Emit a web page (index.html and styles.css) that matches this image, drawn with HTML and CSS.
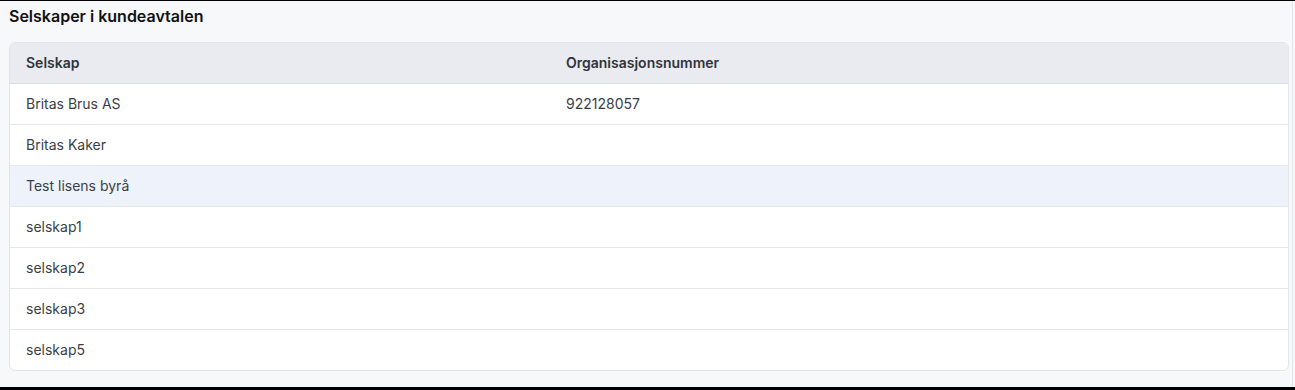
FILE: index.html
```html
<!DOCTYPE html>
<html lang="no">
<head>
<meta charset="utf-8">
<link rel="stylesheet" href="styles.css">
</head>
<body>
<div class="frame">
  <div class="page">
    <h2 class="title">Selskaper i kundeavtalen</h2>
    <div class="card">
      <table class="tbl">
        <thead>
          <tr><th class="c1">Selskap</th><th>Organisasjonsnummer</th></tr>
        </thead>
        <tbody>
          <tr><td>Britas Brus AS</td><td>922128057</td></tr>
          <tr><td>Britas Kaker</td><td></td></tr>
          <tr class="hover"><td>Test lisens byrå</td><td></td></tr>
          <tr><td>selskap1</td><td></td></tr>
          <tr><td>selskap2</td><td></td></tr>
          <tr><td>selskap3</td><td></td></tr>
          <tr><td>selskap5</td><td></td></tr>
        </tbody>
      </table>
    </div>
  </div>
</div>
</body>
</html>
```
FILE: styles.css
```css
html, body { margin: 0; padding: 0; background: #f7f8fa; }
body { font-family: Inter, "Noto Sans", sans-serif; height: 390px; overflow: hidden; }
.frame {
  border-top: 1px solid #000;
  border-bottom: 3px solid #000;
  height: 390px;
  box-sizing: border-box;
}
.page {
  width: 1293px;
  height: 100%;
  border-right: 1px solid #e3e5e9;
  padding: 0 0 0 9px;
  box-sizing: border-box;
}
.title {
  margin: 0;
  padding-top: 5px;
  height: 41px;
  box-sizing: border-box;
  font-size: 16px;
  font-weight: 600;
  color: #111;
  line-height: 20px;
}
.card {
  width: 1280px;
  background: #fff;
  border: 1px solid #e2e4e8;
  border-radius: 6px;
  overflow: hidden;
  box-sizing: border-box;
}
.tbl { width: 100%; border-collapse: collapse; font-size: 14px; color: #3a3f47; }
.tbl th {
  background: #e9ebf0;
  text-align: left;
  font-weight: 600;
  color: #2f343b;
  height: 40px;
  padding: 0 16px;
  border-bottom: 1px solid #d9dce1;
  box-sizing: border-box;
}
.tbl th.c1 { width: 540px; }
.tbl td {
  height: 41px;
  padding: 0 16px;
  border-bottom: 1px solid #e5e7eb;
  box-sizing: border-box;
}
.tbl tbody tr:last-child td { border-bottom: none; }
.tbl tr.hover td { background: #eef2fa; }
```
